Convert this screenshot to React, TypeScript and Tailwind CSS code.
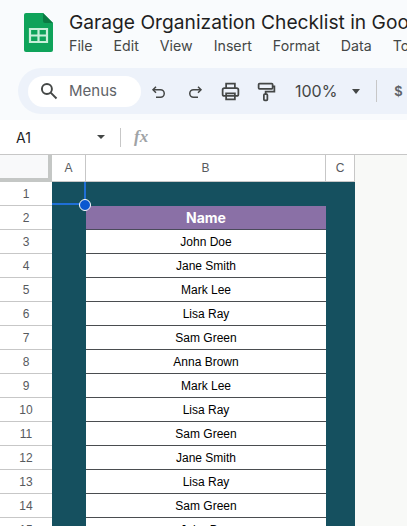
import React from "react";

const names = ["John Doe","Jane Smith","Mark Lee","Lisa Ray","Sam Green","Anna Brown","Mark Lee","Lisa Ray","Sam Green","Jane Smith","Lisa Ray","Sam Green","John Doe"];

function Ico({ children, className = "" }: { children: React.ReactNode; className?: string }) {
  return (
    <svg viewBox="0 0 24 24" fill="none" stroke="#444746" strokeWidth="2" className={className}>
      {children}
    </svg>
  );
}

export default function App() {
  return (
    <div className="w-[407px] h-[526px] overflow-hidden bg-[#f9fbfd] flex flex-col font-['Liberation_Sans',sans-serif]">
      {/* Title area */}
      <div className="h-[68px] flex shrink-0">
        <div className="w-[69px] pl-[24px] pt-[13px] shrink-0">
          <svg width="29" height="39" viewBox="0 0 29 39">
            <path d="M2 0H19L29 10V37a2 2 0 0 1-2 2H2a2 2 0 0 1-2-2V2a2 2 0 0 1 2-2Z" fill="#0fa35a" />
            <path d="M19 0L29 10H21a2 2 0 0 1-2-2Z" fill="#0b7a43" />
            <path d="M6 16H23V29H6Z" fill="none" stroke="#c8efd9" strokeWidth="2.2" />
            <path d="M6 22.5H23M14.500 16V29" stroke="#c8efd9" strokeWidth="2.200" />
          </svg>
        </div>
        <div className="flex flex-col min-w-0 pt-[9px]">
          <div className="text-[19.2px] leading-[26px] text-[#1f1f1f] whitespace-nowrap font-['Inter',sans-serif]">Garage Organization Checklist in Google Sheets</div>
          <div className="flex gap-[21px] mt-[1px] text-[14.2px] leading-[20px] text-[#444746] whitespace-nowrap font-['Inter',sans-serif]">
            <span>File</span><span>Edit</span><span>View</span><span>Insert</span><span>Format</span><span>Data</span><span>Tools</span>
          </div>
        </div>
      </div>
      {/* Toolbar */}
      <div className="h-[46px] ml-[18px] bg-[#edf2fa] rounded-l-[23px] flex items-center pl-[10px] shrink-0">
        <div className="w-[113px] h-[31px] bg-white rounded-full flex items-center pl-[11px] shrink-0">
          <svg width="20" height="20" viewBox="0 0 24 24" fill="none" stroke="#444746" strokeWidth="2.300"><circle cx="9.500" cy="9.500" r="6" /><path d="M14 14l7 7" /></svg>
          <span className="ml-[10px] text-[15px] text-[#5f6368] font-['Inter',sans-serif]">Menus</span>
        </div>
        <Ico className="w-[18px] h-[18px] ml-[9px] mt-[2px] shrink-0"><path d="M8 5L4 9l4 4" /><path d="M4 9h10a5 5 0 0 1 0 10H8" /></Ico>
        <Ico className="w-[18px] h-[18px] ml-[18px] mt-[2px] shrink-0"><path d="M16 5l4 4-4 4" /><path d="M20 9H10a5 5 0 0 0 0 10h6" /></Ico>
        <Ico className="w-[21px] h-[21px] ml-[16px] shrink-0"><path d="M7 8V3h10v5" /><rect x="3" y="8" width="18" height="9" rx="2" /><path d="M7 14h10v7H7z" /></Ico>
        <Ico className="w-[21px] h-[21px] ml-[15px] shrink-0"><rect x="3" y="3" width="16" height="6" rx="1" /><path d="M19 6h2v6H11v3" /><rect x="9" y="15" width="4" height="7" rx="1" /></Ico>
        <span className="ml-[18px] text-[16px] text-[#444746] font-['Inter',sans-serif] shrink-0">100%</span>
        <div className="ml-[15px] w-0 h-0 border-x-[4px] border-x-transparent border-t-[5px] border-t-[#444746] shrink-0" />
        <div className="ml-[16px] w-px h-[22px] bg-[#c7c7c7] shrink-0" />
        <span className="ml-[17px] text-[14px] font-bold text-[#5f6368] shrink-0">$</span>
      </div>
      <div className="h-[6px] shrink-0" />
      {/* Formula bar */}
      <div className="h-[35px] bg-white flex items-center border-b border-[#c7c7c7] shrink-0">
        <span className="ml-[16px] w-[81px] text-[14px] text-[#1f1f1f] font-['Inter',sans-serif]">A1</span>
        <div className="w-0 h-0 border-x-[4px] border-x-transparent border-t-[4px] border-t-[#444746]" />
        <div className="ml-[15px] w-px h-[19px] bg-[#c7c7c7]" />
        <span className="ml-[13px] text-[17px] font-bold italic text-[#a0a3a6] font-['Liberation_Serif',serif]">fx</span>
      </div>
      {/* Grid */}
      <div className="relative flex-1 bg-[#f8f9f7] overflow-hidden">
        <div className="flex h-[27px] text-[12px] text-[#575a5e]">
          <div className="w-[52px] shrink-0 bg-[#f8f9fa] border-r-[4px] border-b-[4px] border-[#c4c7c5]" />
          <div className="w-[34px] bg-white border-r border-b border-[#c7c7c7] flex items-center justify-center">A</div>
          <div className="w-[240px] bg-white border-r border-b border-[#c7c7c7] flex items-center justify-center">B</div>
          <div className="w-[29px] bg-white border-r border-b border-[#c7c7c7] flex items-center justify-center">C</div>
        </div>
        <div className="w-[355px]">
          <div className="flex h-[24px]">
            <div className="w-[52px] shrink-0 bg-white border-b border-[#c7c7c7] flex items-center justify-center text-[12px] text-[#575a5e]">1</div>
            <div className="flex-1 bg-[#15505f]" />
          </div>
          <div className="flex h-[24px]">
            <div className="w-[52px] shrink-0 bg-white border-b border-[#c7c7c7] flex items-center justify-center text-[12px] text-[#575a5e]">2</div>
            <div className="w-[34px] bg-[#15505f]" />
            <div className="w-[240px] bg-[#8a70a6] border-b border-[#4a4a5a] flex items-center justify-center text-[14px] font-bold text-white font-['Inter',sans-serif]">Name</div>
            <div className="w-[29px] bg-[#15505f]" />
          </div>
          {names.map((n, i) => (
            <div key={i} className="flex h-[24px]">
              <div className="w-[52px] shrink-0 bg-white border-b border-[#c7c7c7] flex items-center justify-center text-[12px] text-[#575a5e]">{i + 3}</div>
              <div className="w-[34px] bg-[#15505f]" />
              <div className="w-[240px] bg-white border-b border-[#4a4d50] flex items-center justify-center text-[12px] text-black">{n}</div>
              <div className="w-[29px] bg-[#15505f]" />
            </div>
          ))}
        </div>
        {/* selection */}
        <div className="absolute left-[52px] top-[27px] w-[34px] h-[23px] border-r-2 border-b-2 border-[#1f6fd6]" />
        <div className="absolute left-[79px] top-[44px] w-[12px] h-[12px] rounded-full bg-[#0b57d0] border-[1.5px] border-white" />
      </div>
    </div>
  );
}
